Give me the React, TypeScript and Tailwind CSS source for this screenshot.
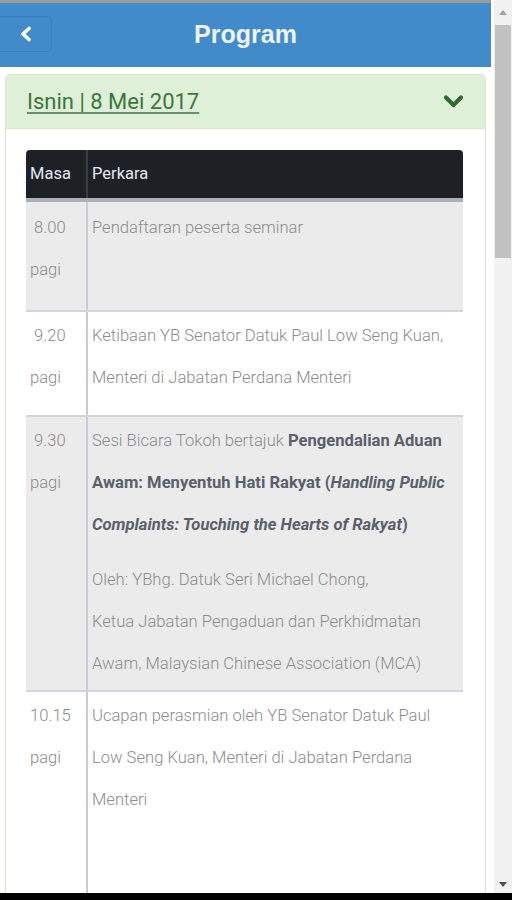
import React from 'react';

interface Row {
    time: string;
    bg: string;
    height: string;
    content: React.ReactNode;
}

const rows: Row[] = [
    {
        time: '\u00a08.00',
        bg: 'bg-[#ebebeb]',
        height: 'h-[108px]',
        content: <p>Pendaftaran peserta seminar</p>,
    },
    {
        time: '\u00a09.20',
        bg: 'bg-white',
        height: 'h-[105px]',
        content: (
            <p>
                Ketibaan YB Senator Datuk Paul Low Seng Kuan,
                <br />
                Menteri di Jabatan Perdana Menteri
            </p>
        ),
    },
    {
        time: '\u00a09.30',
        bg: 'bg-[#ebebeb]',
        height: 'h-[275px]',
        content: (
            <>
                <p>
                    Sesi Bicara Tokoh bertajuk <b className="font-bold text-[#5b5f6b]">Pengendalian Aduan</b>
                    <br />
                    <b className="font-bold text-[#5b5f6b]">
                        Awam: Menyentuh Hati Rakyat (<i>Handling Public</i>
                    </b>
                    <br />
                    <b className="font-bold text-[#5b5f6b]">
                        <i>Complaints: Touching the Hearts of Rakyat</i>)
                    </b>
                </p>
                <p className="mt-[13px]">
                    Oleh: YBhg. Datuk Seri Michael Chong,
                    <br />
                    Ketua Jabatan Pengaduan dan Perkhidmatan
                    <br />
                    Awam, Malaysian Chinese Association (MCA)
                </p>
            </>
        ),
    },
    {
        time: '10.15',
        bg: 'bg-white',
        height: 'h-[210px]',
        content: (
            <p>
                Ucapan perasmian oleh YB Senator Datuk Paul
                <br />
                Low Seng Kuan, Menteri di Jabatan Perdana
                <br />
                Menteri
            </p>
        ),
    },
];

const App: React.FC = () => {
    return (
        <div className="w-[512px] h-[900px] flex flex-col bg-white overflow-hidden font-['Roboto',sans-serif]">
            <div className="flex flex-1 min-h-0">
                {/* Page */}
                <div className="w-[491px] flex flex-col">
                    <div className="h-[3px] bg-[#9c9c9c]"></div>

                    {/* Header */}
                    <div className="relative h-[64px] bg-[#428bca] flex items-center justify-center">
                        <button className="absolute left-[-6px] top-[13px] w-[58px] h-[36px] rounded-[5px] border border-[#3b7fbe] flex items-center justify-center pl-[6px]">
                            <svg width="16" height="16" viewBox="0 0 16 16">
                                <path d="M11 2.5 L5 8 L11 13.5" fill="none" stroke="#ffffff" strokeWidth="3.6" strokeLinecap="round" strokeLinejoin="round" />
                            </svg>
                        </button>
                        <span className="text-[#eef3fa] text-[25px] font-bold font-['Liberation_Sans',Arial,sans-serif]">Program</span>
                    </div>

                    {/* Panel */}
                    <div className="flex-1 min-h-0 pl-[5px] pr-[5px] pt-[7px]">
                        <div className="h-full border-x border-t border-[#d6e9c6] rounded-t-[5px] overflow-hidden">
                            <div className="h-[54px] bg-[#dff0d8] border-b border-[#d6e9c6] flex items-center justify-between pl-[21px] pr-[21px]">
                                <span className="text-[#3c763d] text-[22px] underline underline-offset-[3px] decoration-[#6b8f6b]">Isnin | 8 Mei 2017</span>
                                <svg width="21" height="15" viewBox="0 0 21 15">
                                    <path d="M3 3.5 L10.5 11 L18 3.5" fill="none" stroke="#2f6a2f" strokeWidth="4.2" strokeLinecap="round" strokeLinejoin="round" />
                                </svg>
                            </div>

                            {/* Table */}
                            <div className="pt-[21px] pl-[20px] pr-[21px]">
                                <div className="w-[437px] text-[16.6px] text-[#8c8c8c] font-light">
                                    <div className="flex h-[52px] bg-[#1d2024] rounded-t-[4px] border-b-[4px] border-[#a8b0b8] text-[#e4e8f4] text-[16.5px] font-normal">
                                        <div className="w-[62px] border-r-2 border-[#3a3d44] flex items-center pl-[4px]">Masa</div>
                                        <div className="flex-1 flex items-center pl-[4px]">Perkara</div>
                                    </div>
                                    {rows.map((row, i) => (
                                        <div key={i} className={`flex ${row.height} ${row.bg} ${i > 0 ? 'border-t-2 border-[#d4d4de]' : ''}`}>
                                            <div className={`w-[62px] border-r-2 border-[#c9c9d8] pl-[4px] leading-[42px] ${i > 0 ? 'pt-[3px]' : 'pt-[5px]'}`}>
                                                <p>{row.time}</p>
                                                <p>pagi</p>
                                            </div>
                                            <div className={`flex-1 pl-[4px] leading-[42px] ${i > 0 ? 'pt-[3px]' : 'pt-[5px]'}`}>
                                                {row.content}
                                            </div>
                                        </div>
                                    ))}
                                </div>
                            </div>
                        </div>
                    </div>
                </div>

                {/* Scrollbar */}
                <div className="w-[3px] bg-white"></div>
                <div className="flex-1 flex flex-col bg-[#f1f1f1]">
                    <div className="h-[25px] flex items-center justify-center bg-[#f1f1f1]">
                        <svg width="8" height="5" viewBox="0 0 8 5">
                            <path d="M0 5 L4 0 L8 5 Z" fill="#a3a3a3" />
                        </svg>
                    </div>
                    <div className="h-[233px] mx-[1px] bg-[#c1c1c1]"></div>
                    <div className="flex-1"></div>
                    <div className="h-[18px] flex items-center justify-center">
                        <svg width="8" height="5" viewBox="0 0 8 5">
                            <path d="M0 0 L8 0 L4 5 Z" fill="#505050" />
                        </svg>
                    </div>
                </div>
            </div>
            <div className="h-[7px] bg-black"></div>
        </div>
    );
};

export default App;
